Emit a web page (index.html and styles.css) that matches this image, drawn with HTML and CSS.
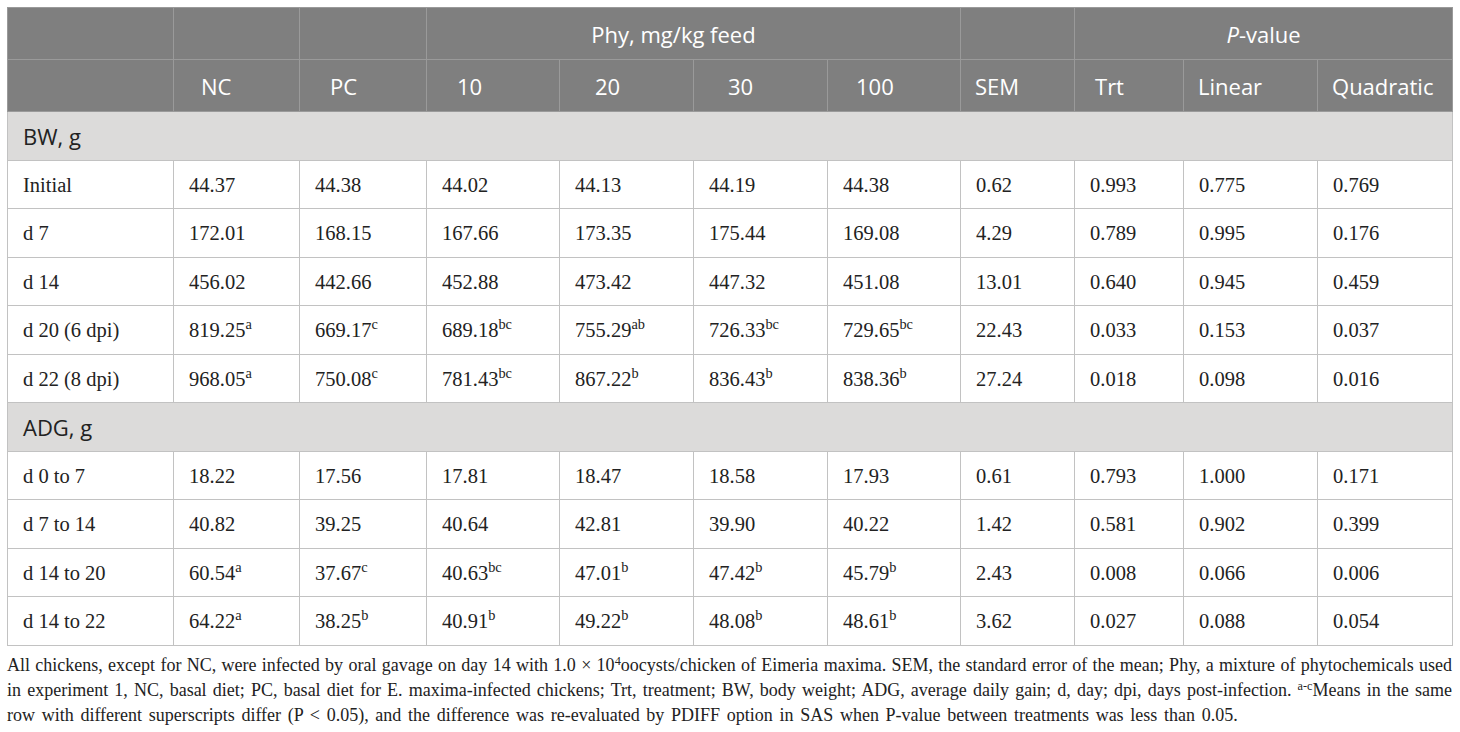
FILE: index.html
```html
<!DOCTYPE html>
<html>
<head>
<meta charset="utf-8">
<link rel="stylesheet" href="styles.css">
</head>
<body>
<div class="page">
<table class="data">
<colgroup>
<col style="width:166px"><col style="width:126px"><col style="width:127px"><col style="width:133px"><col style="width:134px"><col style="width:134px"><col style="width:133px"><col style="width:114px"><col style="width:109px"><col style="width:134px"><col style="width:135px">
</colgroup>
<thead>
<tr class="h1">
<th></th><th></th><th></th>
<th colspan="4" class="phy">Phy, mg/kg feed</th>
<th></th>
<th colspan="3" class="pv"><i>P</i>-value</th>
</tr>
<tr class="h2">
<th></th>
<th class="p28">NC</th>
<th class="p31">PC</th>
<th class="p31">10</th>
<th class="p36">20</th>
<th class="p35">30</th>
<th class="p29">100</th>
<th class="p15">SEM</th>
<th class="p21">Trt</th>
<th class="p15">Linear</th>
<th class="p15">Quadratic</th>
</tr>
</thead>
<tbody>
<tr class="sec"><td colspan="11">BW, g</td></tr>
<tr><td>Initial</td><td>44.37</td><td>44.38</td><td>44.02</td><td>44.13</td><td>44.19</td><td>44.38</td><td>0.62</td><td>0.993</td><td>0.775</td><td>0.769</td></tr>
<tr><td>d 7</td><td>172.01</td><td>168.15</td><td>167.66</td><td>173.35</td><td>175.44</td><td>169.08</td><td>4.29</td><td>0.789</td><td>0.995</td><td>0.176</td></tr>
<tr><td>d 14</td><td>456.02</td><td>442.66</td><td>452.88</td><td>473.42</td><td>447.32</td><td>451.08</td><td>13.01</td><td>0.640</td><td>0.945</td><td>0.459</td></tr>
<tr><td>d 20 (6 dpi)</td><td>819.25<sup>a</sup></td><td>669.17<sup>c</sup></td><td>689.18<sup>bc</sup></td><td>755.29<sup>ab</sup></td><td>726.33<sup>bc</sup></td><td>729.65<sup>bc</sup></td><td>22.43</td><td>0.033</td><td>0.153</td><td>0.037</td></tr>
<tr><td>d 22 (8 dpi)</td><td>968.05<sup>a</sup></td><td>750.08<sup>c</sup></td><td>781.43<sup>bc</sup></td><td>867.22<sup>b</sup></td><td>836.43<sup>b</sup></td><td>838.36<sup>b</sup></td><td>27.24</td><td>0.018</td><td>0.098</td><td>0.016</td></tr>
<tr class="sec"><td colspan="11">ADG, g</td></tr>
<tr><td>d 0 to 7</td><td>18.22</td><td>17.56</td><td>17.81</td><td>18.47</td><td>18.58</td><td>17.93</td><td>0.61</td><td>0.793</td><td>1.000</td><td>0.171</td></tr>
<tr><td>d 7 to 14</td><td>40.82</td><td>39.25</td><td>40.64</td><td>42.81</td><td>39.90</td><td>40.22</td><td>1.42</td><td>0.581</td><td>0.902</td><td>0.399</td></tr>
<tr><td>d 14 to 20</td><td>60.54<sup>a</sup></td><td>37.67<sup>c</sup></td><td>40.63<sup>bc</sup></td><td>47.01<sup>b</sup></td><td>47.42<sup>b</sup></td><td>45.79<sup>b</sup></td><td>2.43</td><td>0.008</td><td>0.066</td><td>0.006</td></tr>
<tr><td>d 14 to 22</td><td>64.22<sup>a</sup></td><td>38.25<sup>b</sup></td><td>40.91<sup>b</sup></td><td>49.22<sup>b</sup></td><td>48.08<sup>b</sup></td><td>48.61<sup>b</sup></td><td>3.62</td><td>0.027</td><td>0.088</td><td>0.054</td></tr>
</tbody>
</table>
<div class="note">
<span class="line">All chickens, except for NC, were infected by oral gavage on day 14 with 1.0 × 10<sup>4</sup>oocysts/chicken of Eimeria maxima. SEM, the standard error of the mean; Phy, a mixture of phytochemicals used</span>
<span class="line">in experiment 1, NC, basal diet; PC, basal diet for E. maxima-infected chickens; Trt, treatment; BW, body weight; ADG, average daily gain; d, day; dpi, days post-infection. <sup>a-c</sup>Means in the same</span>
<span class="line last">row with different superscripts differ (P &lt; 0.05), and the difference was re-evaluated by PDIFF option in SAS when P-value between treatments was less than 0.05.</span>
</div>
</div>
</body>
</html>
```
FILE: styles.css
```css
html, body {
  margin: 0;
  padding: 0;
  background: #ffffff;
}
.page {
  padding: 7px;
  width: 1445px;
}
.data {
  border-collapse: collapse;
  table-layout: fixed;
  width: 1445px;
  font-family: "Liberation Serif", "Times New Roman", serif;
  font-size: 20.5px;
  color: #222222;
}
.data th, .data td {
  border: 1px solid #c2c2c2;
  padding: 0 0 0 15px;
  text-align: left;
  font-weight: normal;
  white-space: nowrap;
}
.data thead th {
  background: #7f7f7f;
  color: #ffffff;
  font-family: "Open Sans", "Liberation Sans", sans-serif;
  font-size: 22px;
  border-color: #9a9a9a;
  height: 51px;
}
.data thead th.phy {
  text-align: center;
  padding: 0 40px 0 0;
}
.data thead th.pv {
  text-align: center;
  padding: 0;
}
.data thead th.pv i {
  font-style: italic;
}
.p28 { padding-left: 27px !important; }
.p31 { padding-left: 30px !important; }
.p36 { padding-left: 35px !important; }
.p35 { padding-left: 34px !important; }
.p29 { padding-left: 28px !important; }
.p15 { padding-left: 14px !important; }
.p21 { padding-left: 20px !important; }
.data tbody td {
  height: 45.5px;
  padding-top: 2px;
}
.data tr.sec td {
  background: #dcdbda;
  font-family: "Open Sans", "Liberation Sans", sans-serif;
  font-size: 22px;
  color: #222222;
  height: 47.5px;
  padding-top: 0;
}
.data sup {
  font-size: 0.7em;
  line-height: 0;
  vertical-align: 0.55em;
}
.note {
  font-family: "Liberation Serif", "Times New Roman", serif;
  font-size: 18px;
  line-height: 25px;
  color: #222222;
  padding-top: 7px;
}
.note .line {
  display: block;
  text-align: justify;
  text-align-last: justify;
  white-space: nowrap;
}
.note .line.last {
  text-align-last: left;
  text-align: left;
  word-spacing: 2.2px;
}
.note sup {
  font-size: 0.68em;
  line-height: 0;
  vertical-align: 0.5em;
}
```
